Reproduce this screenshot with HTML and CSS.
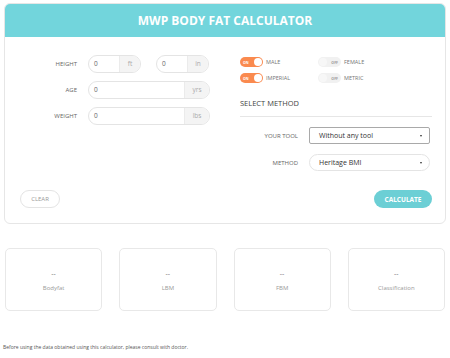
FILE: index.html
```html
<!DOCTYPE html>
<html lang="en">
<head>
  <meta charset="UTF-8" />
  <meta name="viewport" content="width=device-width, initial-scale=1.0" />
  <title>MWP Body Fat Calculator</title>
  <link rel="stylesheet" href="styles.css">
</head>
<body>

  <div class="calc-card">
    <div class="calc-header">MWP BODY FAT CALCULATOR</div>

    <div class="calc-body">
      <div class="measure-col">
        <div class="form-row">
          <div class="form-label">HEIGHT</div>
          <div class="input-group short">
            <span class="input-value">0</span>
            <span class="input-unit">ft</span>
          </div>
          <div class="input-group short">
            <span class="input-value">0</span>
            <span class="input-unit">in</span>
          </div>
        </div>
        <div class="form-row">
          <div class="form-label">AGE</div>
          <div class="input-group wide">
            <span class="input-value">0</span>
            <span class="input-unit unit-wide">yrs</span>
          </div>
        </div>
        <div class="form-row">
          <div class="form-label">WEIGHT</div>
          <div class="input-group wide">
            <span class="input-value">0</span>
            <span class="input-unit unit-wide">lbs</span>
          </div>
        </div>
      </div>

      <div class="method-col">
        <div class="toggle-row">
          <div class="toggle-option">
            <span class="toggle on"><span class="toggle-text">ON</span><span class="knob"></span></span>
            <span class="toggle-label">MALE</span>
          </div>
          <div class="toggle-option">
            <span class="toggle off"><span class="knob"></span><span class="toggle-text">OFF</span></span>
            <span class="toggle-label">FEMALE</span>
          </div>
        </div>
        <div class="toggle-row">
          <div class="toggle-option">
            <span class="toggle on"><span class="toggle-text">ON</span><span class="knob"></span></span>
            <span class="toggle-label">IMPERIAL</span>
          </div>
          <div class="toggle-option">
            <span class="toggle off"><span class="knob"></span><span class="toggle-text">OFF</span></span>
            <span class="toggle-label">METRIC</span>
          </div>
        </div>

        <div class="method-title">SELECT METHOD</div>

        <div class="select-row">
          <div class="select-label">YOUR TOOL</div>
          <div class="select-box square">Without any tool<span class="caret"></span></div>
        </div>
        <div class="select-row">
          <div class="select-label">METHOD</div>
          <div class="select-box round">Heritage BMI<span class="caret"></span></div>
        </div>
      </div>

      <div class="button-row">
        <button class="btn btn-clear">CLEAR</button>
        <button class="btn btn-calc">CALCULATE</button>
      </div>
    </div>
  </div>

  <div class="results">
    <div class="result-box">
      <div class="result-value">--</div>
      <div class="result-name">Bodyfat</div>
    </div>
    <div class="result-box">
      <div class="result-value">--</div>
      <div class="result-name">LBM</div>
    </div>
    <div class="result-box">
      <div class="result-value">--</div>
      <div class="result-name">FBM</div>
    </div>
    <div class="result-box">
      <div class="result-value">--</div>
      <div class="result-name">Classification</div>
    </div>
  </div>

  <div class="disclaimer">Before using the data obtained using this calculator, please consult with doctor.</div>

</body>
</html>
```

FILE: styles.css
```css
body {
  margin: 0;
  padding: 3px 4px 0 4px;
  background-color: white;
  font-family: 'Open Sans', sans-serif;
  color: #777;
}

.calc-card {
  border: 1px solid #e6e6e6;
  border-radius: 6px;
  overflow: hidden;
  background-color: white;
}

.calc-header {
  height: 34px;
  margin: -1px -1px 0 -1px;
  background-color: #72d5dc;
  color: white;
  font-size: 12px;
  font-weight: bold;
  display: flex;
  align-items: center;
  justify-content: center;
}

.calc-body {
  display: grid;
  grid-template-columns: 220px 1fr;
  padding: 18px 15px 15px 15px;
}

/* left column */
.form-row {
  display: flex;
  align-items: center;
  height: 18px;
  margin-bottom: 8px;
}

.form-label {
  width: 57px;
  margin-right: 11px;
  text-align: right;
  font-size: 6px;
  color: #666;
}

.input-group {
  display: flex;
  height: 18px;
  box-sizing: border-box;
  border: 1px solid #e4e4e4;
  border-radius: 9px;
  overflow: hidden;
  margin-right: 15px;
}

.input-group.short { width: 53px; }
.input-group.wide { width: 122px; }

.input-value {
  flex: 1;
  padding-left: 5px;
  font-size: 6.5px;
  line-height: 16px;
  color: #666;
}

.input-unit {
  width: 20px;
  background-color: #f4f4f4;
  border-left: 1px solid #ebebeb;
  font-size: 6.5px;
  line-height: 16px;
  text-align: center;
  color: #aaa;
}

.input-unit.unit-wide { width: 24px; }

/* right column */
.method-col {
  padding-top: 2px;
}

.toggle-row {
  display: flex;
  height: 10px;
  margin-bottom: 6px;
}

.toggle-option {
  display: flex;
  align-items: center;
  width: 78px;
}

.toggle {
  display: flex;
  align-items: center;
  justify-content: space-between;
  width: 23px;
  height: 10px;
  box-sizing: border-box;
  border-radius: 5px;
  padding: 0 1px;
}

.toggle.on { background-color: #fa8a4f; }
.toggle.off { background-color: #f1f1f1; }

.toggle-text {
  font-size: 3.5px;
  font-weight: bold;
  padding: 0 2px;
}

.toggle.on .toggle-text { color: white; }
.toggle.off .toggle-text { color: #999; }

.knob {
  width: 8px;
  height: 8px;
  border-radius: 50%;
  background-color: white;
}

.toggle.off .knob {
  background-color: #f7f7f7;
}

.toggle-label {
  margin-left: 3px;
  font-size: 5.5px;
  color: #777;
}

.method-title {
  margin-top: 15px;
  padding-bottom: 8px;
  border-bottom: 1px solid #e6e6e6;
  font-size: 7.5px;
  color: #444;
  width: 192px;
}

.select-row {
  display: flex;
  align-items: center;
  height: 17px;
  margin-top: 10px;
}

.select-label {
  width: 58px;
  margin-right: 11px;
  text-align: right;
  font-size: 6px;
  color: #666;
}

.select-box {
  position: relative;
  width: 121px;
  height: 17px;
  box-sizing: border-box;
  padding-left: 9px;
  font-size: 7px;
  line-height: 15px;
  color: #333;
}

.select-box.square {
  border: 1px solid #a9a9a9;
  border-radius: 2px;
}

.select-box.round {
  border: 1px solid #e4e4e4;
  border-radius: 9px;
}

.caret {
  position: absolute;
  right: 7px;
  top: 7px;
  border-left: 1.5px solid transparent;
  border-right: 1.5px solid transparent;
  border-top: 2px solid #333;
}

/* buttons */
.button-row {
  grid-column: 1 / 3;
  display: flex;
  justify-content: space-between;
  margin-top: 19px;
}

.btn {
  height: 18px;
  border-radius: 9px;
  font-family: 'Open Sans', sans-serif;
  font-size: 6px;
  padding: 0;
  cursor: pointer;
}

.btn-clear {
  width: 40px;
  background-color: white;
  border: 1px solid #e4e4e4;
  color: #999;
}

.btn-calc {
  width: 58px;
  background-color: #6ccfd5;
  border: none;
  color: white;
  font-weight: bold;
  font-size: 6.5px;
}

/* results */
.results {
  display: grid;
  grid-template-columns: repeat(4, 1fr);
  gap: 17px;
  margin: 24px 1px 0 1px;
}

.result-box {
  height: 63px;
  box-sizing: border-box;
  border: 1px solid #e8e8e8;
  border-radius: 5px;
  display: flex;
  flex-direction: column;
  align-items: center;
  justify-content: center;
  padding-top: 3px;
}

.result-value {
  font-size: 7px;
  color: #777;
  line-height: 8px;
}

.result-name {
  font-size: 6px;
  color: #999;
  margin-top: 6px;
}

.disclaimer {
  margin: 33px 0 0 -1px;
  font-size: 5px;
  color: #555;
}
```
